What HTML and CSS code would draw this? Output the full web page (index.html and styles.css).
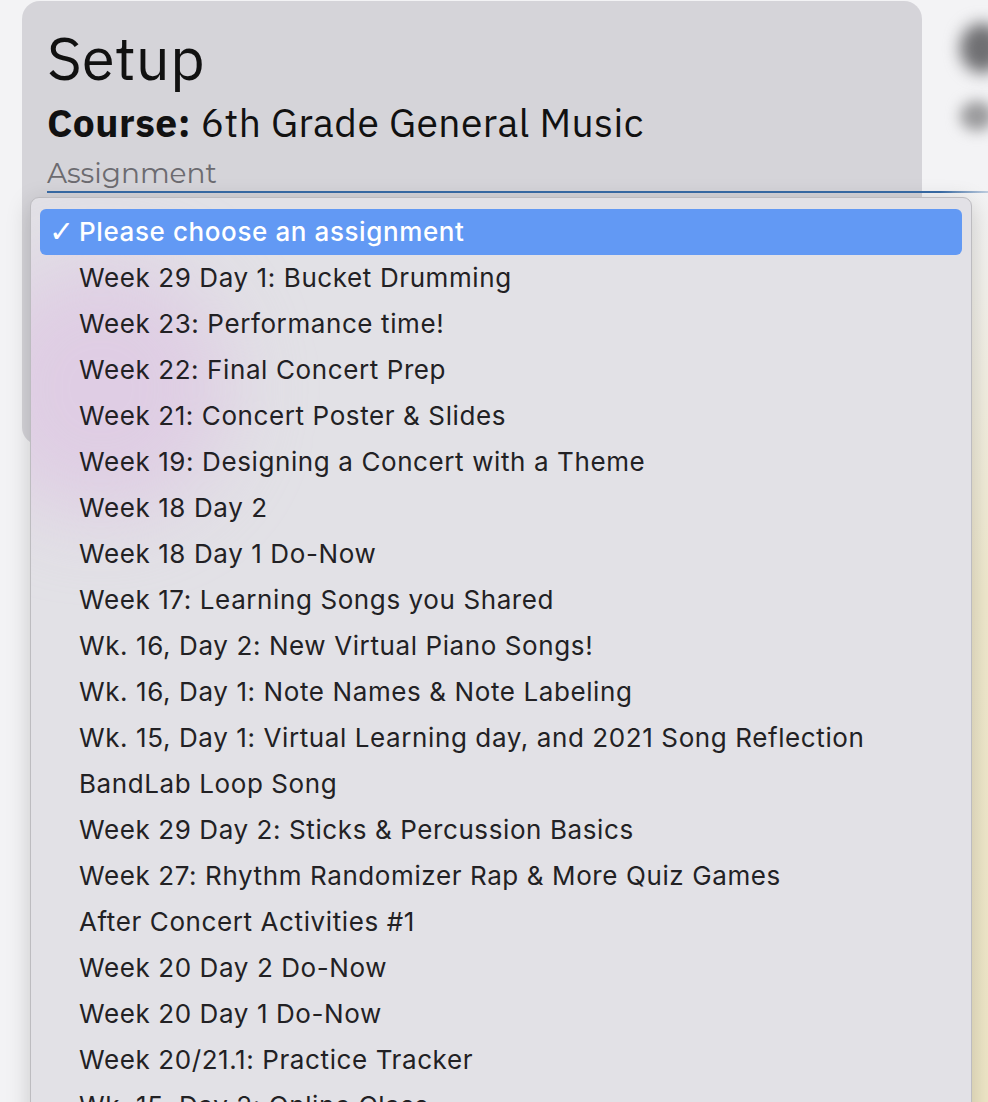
FILE: index.html
```html
<!DOCTYPE html>
<html>
<head>
<meta charset="utf-8">
<link rel="stylesheet" href="styles.css">
</head>
<body>
<div class="page">
  <section class="card">
    <h1 class="title">Setup</h1>
    <p class="course"><b>Course:</b> 6th Grade General Music</p>
    <label class="field-label">Assignment</label>
    <div class="select-top"></div>
  </section>
  <aside class="side">
    <div class="blur-a"></div>
    <div class="blur-b"></div>
    <div class="cream"></div>
  </aside>
</div>
<div class="menu">
  <div class="glow"></div>
  <ul class="options">
    <li class="opt selected"><span class="check">✓</span>Please choose an assignment</li>
    <li class="opt">Week 29 Day 1: Bucket Drumming</li>
    <li class="opt">Week 23: Performance time!</li>
    <li class="opt">Week 22: Final Concert Prep</li>
    <li class="opt">Week 21: Concert Poster &amp; Slides</li>
    <li class="opt">Week 19: Designing a Concert with a Theme</li>
    <li class="opt">Week 18 Day 2</li>
    <li class="opt">Week 18 Day 1 Do-Now</li>
    <li class="opt">Week 17: Learning Songs you Shared</li>
    <li class="opt">Wk. 16, Day 2: New Virtual Piano Songs!</li>
    <li class="opt">Wk. 16, Day 1: Note Names &amp; Note Labeling</li>
    <li class="opt">Wk. 15, Day 1: Virtual Learning day, and 2021 Song Reflection</li>
    <li class="opt">BandLab Loop Song</li>
    <li class="opt">Week 29 Day 2: Sticks &amp; Percussion Basics</li>
    <li class="opt">Week 27: Rhythm Randomizer Rap &amp; More Quiz Games</li>
    <li class="opt">After Concert Activities #1</li>
    <li class="opt">Week 20 Day 2 Do-Now</li>
    <li class="opt">Week 20 Day 1 Do-Now</li>
    <li class="opt">Week 20/21.1: Practice Tracker</li>
    <li class="opt">Wk. 15, Day 2: Online Class</li>
  </ul>
</div>
</body>
</html>
```
FILE: styles.css
```css
html, body {
  margin: 0;
  padding: 0;
}
body {
  width: 988px;
  height: 1102px;
  overflow: hidden;
  position: relative;
  background: #f3f3f5;
  font-family: "Noto Sans", sans-serif;
}
.page {
  display: flex;
  gap: 30px;
  padding: 1px 0 0 22px;
}
.card {
  width: 900px;
  height: 444px;
  box-sizing: border-box;
  background: #d5d4d9;
  border-radius: 18px;
  padding: 22px 0 0 25px;
  display: flex;
  flex-direction: column;
  font-family: "IBM Plex Sans", "Noto Sans", sans-serif;
}
.title {
  margin: 0;
  font-size: 60px;
  font-weight: 400;
  line-height: 70px;
  color: #111;
}
.course {
  margin: 5px 0 0;
  font-size: 39px;
  line-height: 50px;
  letter-spacing: 0.45px;
  color: #111;
}
.course b { font-weight: 700; }
.field-label {
  margin-top: 8px;
  font-family: "Montserrat", "Open Sans", sans-serif;
  font-size: 28px;
  line-height: 34px;
  color: #6c6b70;
}
.select-top {
  margin-top: 1px;
  width: 960px;
  height: 2px;
  background: linear-gradient(90deg, #386ba6 0%, #386ba6 93%, rgba(56,107,166,0) 100%);
}
.side {
  flex: 1;
  position: relative;
  height: 1102px;
}
.blur-a {
  position: absolute;
  left: 8px;
  top: 22px;
  width: 44px;
  height: 50px;
  border-radius: 50%;
  background: #6f6f72;
  filter: blur(8px);
}
.blur-b {
  position: absolute;
  left: 8px;
  top: 100px;
  width: 34px;
  height: 30px;
  border-radius: 50%;
  background: #9a9a9c;
  filter: blur(7px);
}
.cream {
  position: absolute;
  left: 0;
  right: 0;
  top: 180px;
  bottom: 0;
  background: linear-gradient(180deg, rgba(240,234,210,0) 0%, #efe8cc 45%, #eee6c6 100%);
}
.menu {
  position: absolute;
  left: 30px;
  top: 197px;
  width: 942px;
  height: 960px;
  box-sizing: border-box;
  background: #e2e1e6;
  border: 1px solid #bdbcc0;
  border-radius: 9px;
  box-shadow: 0 6px 24px rgba(0,0,0,0.18);
  overflow: hidden;
}
.glow {
  position: absolute;
  left: -60px;
  top: 60px;
  width: 260px;
  height: 260px;
  border-radius: 50%;
  background: rgba(220,190,225,0.55);
  filter: blur(40px);
}
.options {
  position: relative;
  list-style: none;
  margin: 0;
  padding: 11px 9px 0;
  font-family: "Inter", sans-serif;
  font-size: 26px;
  color: #222124;
}
.opt {
  height: 46px;
  line-height: 46px;
  padding-left: 39px;
  white-space: nowrap;
  letter-spacing: 0.6px;
}
.opt.selected {
  position: relative;
  background: #6299f4;
  color: #fff;
  border-radius: 6px;
  font-weight: 500;
}
.check {
  position: absolute;
  left: 9px;
  font-family: "DejaVu Sans", sans-serif;
  font-size: 30px;
  font-weight: 700;
}
```
